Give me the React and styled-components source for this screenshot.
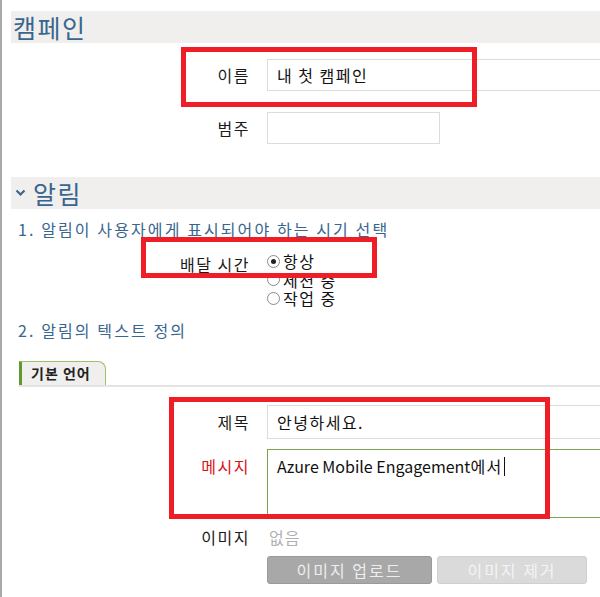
import React from 'react';
import styled, { createGlobalStyle } from 'styled-components';

const GlobalStyle = createGlobalStyle`
  html, body {
    margin: 0;
    padding: 0;
    background: #fff;
    overflow: hidden;
  }
  body {
    font-family: 'Noto Sans CJK KR', 'Noto Sans', sans-serif;
  }
`;

const Page = styled.div`
  width: 600px;
  height: 597px;
  box-sizing: border-box;
  border-left: 2px solid #a9a9a9;
  padding: 11px 0 0 9px;
  overflow: hidden;
`;

const SectionHeader = styled.div`
  display: flex;
  align-items: center;
  gap: 7px;
  height: 32px;
  background: #f0efed;
  padding-left: ${({ withIcon }) => (withIcon ? '4px' : '2px')};
  margin-top: ${({ top }) => top || 0}px;
  color: #38668f;
  font-size: 25px;
  line-height: 32px;
  letter-spacing: 1.5px;
`;

const FormRow = styled.div`
  position: relative;
  display: grid;
  grid-template-columns: 239px 1fr;
  column-gap: 17px;
  align-items: ${({ alignTop }) => (alignTop ? 'start' : 'center')};
  margin-top: ${({ top }) => top || 0}px;
`;

const Label = styled.div`
  text-align: right;
  font-size: 16px;
  color: ${({ required }) => (required ? '#d9131b' : '#1a1a1a')};
  padding-top: ${({ alignTop }) => (alignTop ? '5px' : '0')};
  letter-spacing: 1.5px;
`;

const Input = styled.div`
  box-sizing: border-box;
  width: ${({ width }) => width || 345}px;
  height: ${({ height }) => height || 32}px;
  border: 1px solid #dcdcdc;
  border-color: ${({ green }) => (green ? '#79a54a' : '#dcdcdc')};
  padding: ${({ green }) => (green ? '4px 9px' : '0 9px')};
  display: flex;
  align-items: ${({ green }) => (green ? 'flex-start' : 'center')};
  font-size: 16px;
  color: #111;
  white-space: nowrap;
  letter-spacing: 1.5px;
`;

const Latin = styled.span`
  letter-spacing: 0;
`;

const Caret = styled.span`
  display: inline-block;
  width: 1px;
  height: 19px;
  background: #111;
  margin-left: 1px;
  vertical-align: -3px;
`;

const Highlight = styled.div`
  position: absolute;
  box-sizing: border-box;
  border: 5px solid #ee1d26;
  pointer-events: none;
`;

const StepTitle = styled.div`
  margin-top: ${({ top }) => top || 0}px;
  padding-left: 7px;
  color: #38668f;
  font-size: 16px;
  line-height: 20px;
  letter-spacing: 2.1px;
`;

const RadioList = styled.div`
  display: flex;
  flex-direction: column;
`;

const RadioItem = styled.div`
  display: flex;
  align-items: center;
  gap: 3px;
  height: 18.5px;
  line-height: 18px;
  font-size: 16px;
  color: #111;
  letter-spacing: 1.5px;
`;

const RadioCircle = styled.span`
  position: relative;
  display: inline-block;
  box-sizing: border-box;
  width: 13px;
  height: 13px;
  border-radius: 50%;
  border: 1px solid #8a8a8a;
  background: #fff;
  &::after {
    content: '';
    display: ${({ checked }) => (checked ? 'block' : 'none')};
    position: absolute;
    left: 3px;
    top: 3px;
    width: 5px;
    height: 5px;
    border-radius: 50%;
    background: #222;
  }
`;

const TabBar = styled.div`
  margin-top: 21px;
  margin-left: 8px;
  border-bottom: 2px solid #e4e4e4;
  display: flex;
`;

const Tab = styled.div`
  box-sizing: border-box;
  height: 24px;
  padding: 0 14px 0 9px;
  background: #f0efed;
  border: 1px solid #9cc06e;
  border-bottom: none;
  border-left: 3px solid #5e9a2b;
  border-top-right-radius: 8px;
  font-size: 14px;
  font-weight: bold;
  line-height: 23px;
  color: #222;
  letter-spacing: 1px;
`;

const Group = styled.div`
  position: relative;
  margin-top: ${({ top }) => top || 0}px;
`;

const Muted = styled.div`
  font-size: 16px;
  color: #b0b0b0;
  padding-left: 2px;
  letter-spacing: 1px;
`;

const ButtonRow = styled.div`
  display: flex;
  gap: 5px;
`;

const Button = styled.div`
  box-sizing: border-box;
  width: ${({ width }) => width}px;
  height: 28px;
  border-radius: 3px;
  border: 1px solid ${({ disabled }) => (disabled ? '#cfcfcf' : '#9a9a9a')};
  background: ${({ disabled }) => (disabled ? '#dadada' : '#a8a8a8')};
  color: ${({ disabled }) => (disabled ? '#f4f4f4' : '#eeeeee')};
  font-size: 16px;
  display: flex;
  align-items: center;
  justify-content: center;
  letter-spacing: 2px;
`;

const Chevron = () => (
  <svg width="11" height="8" viewBox="0 0 11 8">
    <polyline points="1.5,1.5 5.5,5.5 9.5,1.5" fill="none" stroke="#38668f" strokeWidth="2.2" />
  </svg>
);

export default function App() {
  return (
    <>
      <GlobalStyle />
      <Page>
        <SectionHeader>캠페인</SectionHeader>

        <FormRow top={16}>
          <Label>이름</Label>
          <Input>내 첫 캠페인</Input>
          <Highlight style={{ left: 170, top: -12, width: 296, height: 60 }} />
        </FormRow>
        <FormRow top={21}>
          <Label>범주</Label>
          <Input width={173}></Input>
        </FormRow>

        <SectionHeader top={33} withIcon>
          <Chevron />
          알림
        </SectionHeader>

        <StepTitle top={10}>1. 알림이 사용자에게 표시되어야 하는 시기 선택</StepTitle>

        <FormRow top={13} alignTop>
          <Label>배달 시간</Label>
          <RadioList>
            <RadioItem>
              <RadioCircle checked />
              항상
            </RadioItem>
            <RadioItem>
              <RadioCircle />
              세션 중
            </RadioItem>
            <RadioItem>
              <RadioCircle />
              작업 중
            </RadioItem>
          </RadioList>
          <Highlight style={{ left: 130, top: -15, width: 236, height: 41 }} />
        </FormRow>

        <StepTitle top={12}>2. 알림의 텍스트 정의</StepTitle>

        <TabBar>
          <Tab>기본 언어</Tab>
        </TabBar>

        <Group top={18}>
          <FormRow>
            <Label>제목</Label>
            <Input height={34}>안녕하세요.</Input>
          </FormRow>
          <FormRow top={10} alignTop>
            <Label required alignTop>메시지</Label>
            <Input green height={69}>
              <span>
                <Latin>Azure Mobile Engagement</Latin>에서
                <Caret />
              </span>
            </Input>
          </FormRow>
          <Highlight style={{ left: 158, top: -8, width: 381, height: 122 }} />
        </Group>

        <FormRow top={7}>
          <Label>이미지</Label>
          <Muted>없음</Muted>
        </FormRow>
        <FormRow top={7}>
          <div />
          <ButtonRow>
            <Button width={165}>이미지 업로드</Button>
            <Button width={150} disabled>
              이미지 제거
            </Button>
          </ButtonRow>
        </FormRow>
      </Page>
    </>
  );
}
